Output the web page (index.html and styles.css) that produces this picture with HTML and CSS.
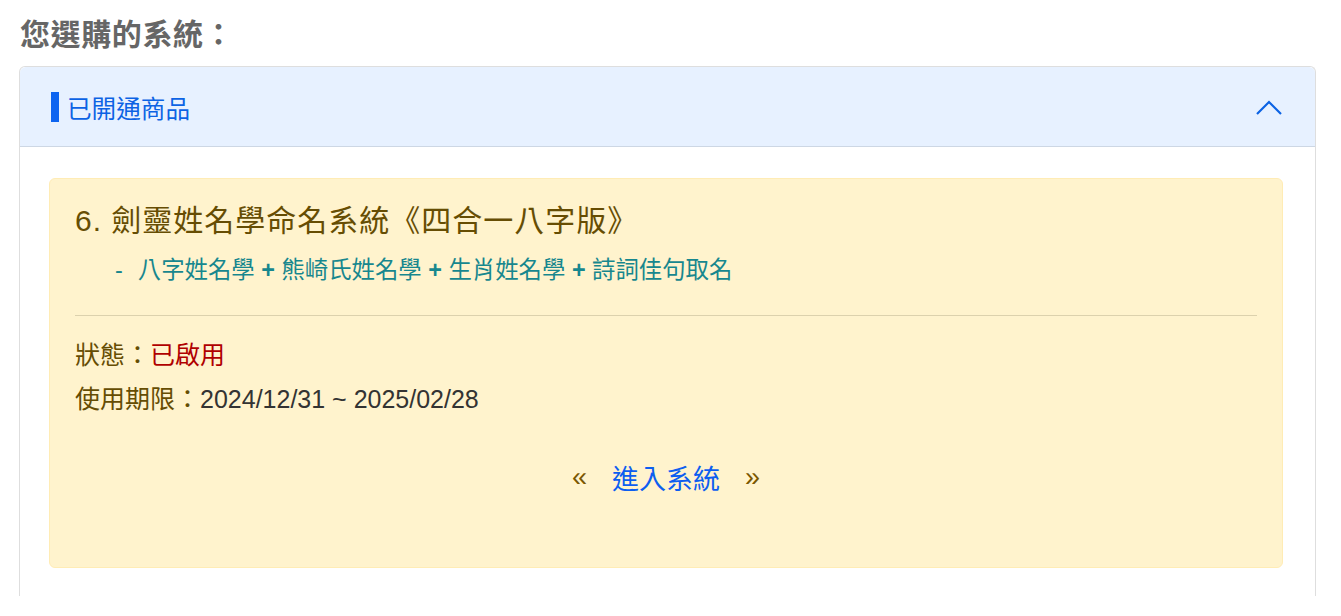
FILE: index.html
```html
<!DOCTYPE html>
<html lang="zh-Hant">
<head>
    <meta charset="UTF-8">
    <meta name="viewport" content="width=device-width, initial-scale=1.0">
    <title>您選購的系統</title>
    <link rel="stylesheet" href="styles.css">
</head>
<body>

    <h2 class="page-title">您選購的系統：</h2>

    <div class="panel">
        <div class="panel-head">
            <span class="bar"></span>
            <span class="head-text">已開通商品</span>
            <svg class="chevron" width="26" height="16" viewBox="0 0 26 16">
                <polyline points="1,15 13,3 25,15" fill="none" stroke="#0c63e4" stroke-width="2.2"/>
            </svg>
        </div>

        <div class="panel-body">
            <div class="product-card">
                <h3 class="product-name">6. 劍靈姓名學命名系統《四合一八字版》</h3>
                <p class="product-sub"><span class="dash">-</span>八字姓名學 <b>+</b> 熊崎氏姓名學 <b>+</b> 生肖姓名學 <b>+</b> 詩詞佳句取名</p>
                <hr>
                <p class="info">狀態：<span class="on">已啟用</span></p>
                <p class="info">使用期限：<span class="date">2024/12/31 ~ 2025/02/28</span></p>
                <div class="enter">
                    <span class="quote">«</span>
                    <a href="#" class="enter-link">進入系統</a>
                    <span class="quote">»</span>
                </div>
            </div>
        </div>
    </div>

</body>
</html>
```

FILE: styles.css
```css
body {
    font-family: "Liberation Sans", "Noto Sans CJK TC", Arial, sans-serif;
    margin: 0;
    padding: 0 25px 0 19px;
    background-color: #fff;
}

.page-title {
    font-size: 30px;
    font-weight: bold;
    color: #666;
    line-height: 40px;
    letter-spacing: 0.6px;
    margin: 15px 0 11px 1px;
}

.panel {
    border: 1px solid #dedede;
    border-bottom: none;
    border-radius: 6px 6px 0 0;
}

.panel-head {
    display: flex;
    align-items: center;
    height: 80px;
    padding: 0 33px 0 31px;
    background-color: #e7f1ff;
    border-radius: 6px 6px 0 0;
    box-shadow: inset 0 -1px 0 #cdd7e4;
}

.bar {
    width: 8px;
    height: 30px;
    background-color: #0d64f0;
    margin-right: 8px;
}

.head-text {
    flex: 1;
    font-size: 24.6px;
    color: #0c63e4;
}

.chevron {
    display: block;
}

.panel-body {
    padding: 31px 32px 28px 29px;
}

.product-card {
    background-color: #fff3cd;
    border: 1px solid #ffecb5;
    border-radius: 6px;
    padding: 22px 25px 70px 25px;
    color: #664d03;
}

.product-name {
    font-size: 30px;
    font-weight: normal;
    line-height: 40px;
    letter-spacing: 1px;
    margin: 0;
}

.product-sub {
    font-size: 23.4px;
    line-height: 36px;
    color: #17878e;
    margin: 11px 0 0 0;
    padding-left: 40px;
}

.dash {
    margin-right: 15px;
}

hr {
    border: none;
    border-top: 1px solid #dcd1ad;
    margin: 27px 0 17px 0;
}

.info {
    font-size: 25px;
    line-height: 44px;
    margin: 0;
}

.on {
    color: #b00000;
}

.date {
    color: #333;
    font-size: 25px;
}

.enter {
    display: flex;
    justify-content: center;
    align-items: center;
    height: 40px;
    margin-top: 36px;
    font-size: 27px;
}

.quote {
    color: #7a5700;
}

.enter-link {
    color: #0d5ef0;
    text-decoration: none;
    margin: 0 25px;
}
```
